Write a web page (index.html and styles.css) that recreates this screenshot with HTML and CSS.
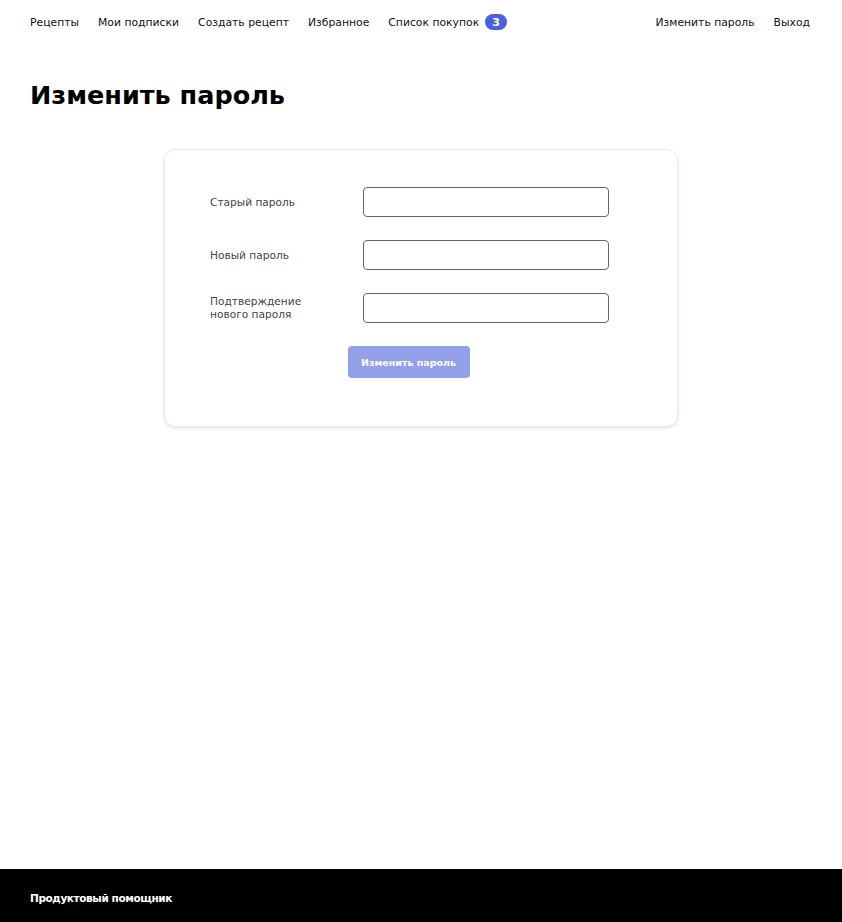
FILE: index.html
```html
<!DOCTYPE html>
<html lang="ru">
<head>
<meta charset="utf-8">
<title>Изменить пароль</title>
<link rel="stylesheet" href="styles.css">
</head>
<body>
<header class="header">
  <nav class="nav">
    <a class="nav-link" href="#">Рецепты</a>
    <a class="nav-link" href="#">Мои подписки</a>
    <a class="nav-link" href="#">Создать рецепт</a>
    <a class="nav-link" href="#">Избранное</a>
    <a class="nav-link" href="#">Список покупок <span class="badge">3</span></a>
  </nav>
  <nav class="nav">
    <a class="nav-link" href="#">Изменить пароль</a>
    <a class="nav-link" href="#">Выход</a>
  </nav>
</header>
<main class="main">
  <h1 class="title">Изменить пароль</h1>
  <form class="card">
    <div class="row">
      <label class="label">Старый пароль</label>
      <input class="input" type="password">
    </div>
    <div class="row">
      <label class="label">Новый пароль</label>
      <input class="input" type="password">
    </div>
    <div class="row">
      <label class="label">Подтверждение<br>нового пароля</label>
      <input class="input" type="password">
    </div>
    <div class="actions">
      <button class="button" type="button" disabled>Изменить пароль</button>
    </div>
  </form>
</main>
<footer class="footer">
  <span class="footer-text">Продуктовый помощник</span>
</footer>
</body>
</html>
```

FILE: styles.css
```css
* { box-sizing: border-box; }
html, body { margin: 0; padding: 0; }
body {
  font-family: "DejaVu Sans", sans-serif;
  color: #000;
  background: #fff;
  min-height: 100vh;
  display: flex;
  flex-direction: column;
}
.header {
  display: flex;
  justify-content: space-between;
  align-items: center;
  height: 44px;
  padding: 0 32px 0 30px;
}
.nav {
  display: flex;
  align-items: center;
  gap: 19px;
}
.nav-link {
  font-size: 10.8px;
  color: #111;
  text-decoration: none;
  display: flex;
  align-items: center;
  gap: 6px;
}
.badge {
  display: inline-flex;
  align-items: center;
  justify-content: center;
  width: 22px;
  height: 16px;
  border-radius: 8px;
  background: #4a61dd;
  color: #fff;
  font-size: 11px;
  font-weight: bold;
}
.main {
  padding: 0 30px;
  flex: 1;
}
.title {
  margin: 35px 0 38px;
  font-size: 25.5px;
  font-weight: bold;
  line-height: 32px;
}
.card {
  width: 514px;
  margin: 0 auto;
  padding: 37px 68px 48px 45px;
  border: 1px solid #ececec;
  border-radius: 12px;
  box-shadow: 0 1px 3px rgba(0,0,0,0.15);
  display: flex;
  flex-direction: column;
  gap: 23px;
}
.row {
  display: flex;
  align-items: center;
}
.label {
  width: 153px;
  font-size: 10.6px;
  color: #444;
  line-height: 13px;
}
.input {
  width: 247px;
  height: 30px;
  border: 1px solid #666;
  border-radius: 4px;
  background: #fff;
}
.actions {
  display: flex;
  justify-content: center;
  padding-right: 2px;
}
.button {
  width: 122px;
  height: 32px;
  border: none;
  border-radius: 4px;
  background: #93a0e9;
  color: #fff;
  font-family: "DejaVu Sans", sans-serif;
  font-size: 9.5px;
  font-weight: bold;
}
.footer {
  height: 53px;
  background: #000;
  display: flex;
  align-items: center;
  padding: 4px 30px 0;
}
.footer-text {
  color: #fff;
  font-size: 10.5px;
  font-weight: bold;
  letter-spacing: -0.4px;
}
```
